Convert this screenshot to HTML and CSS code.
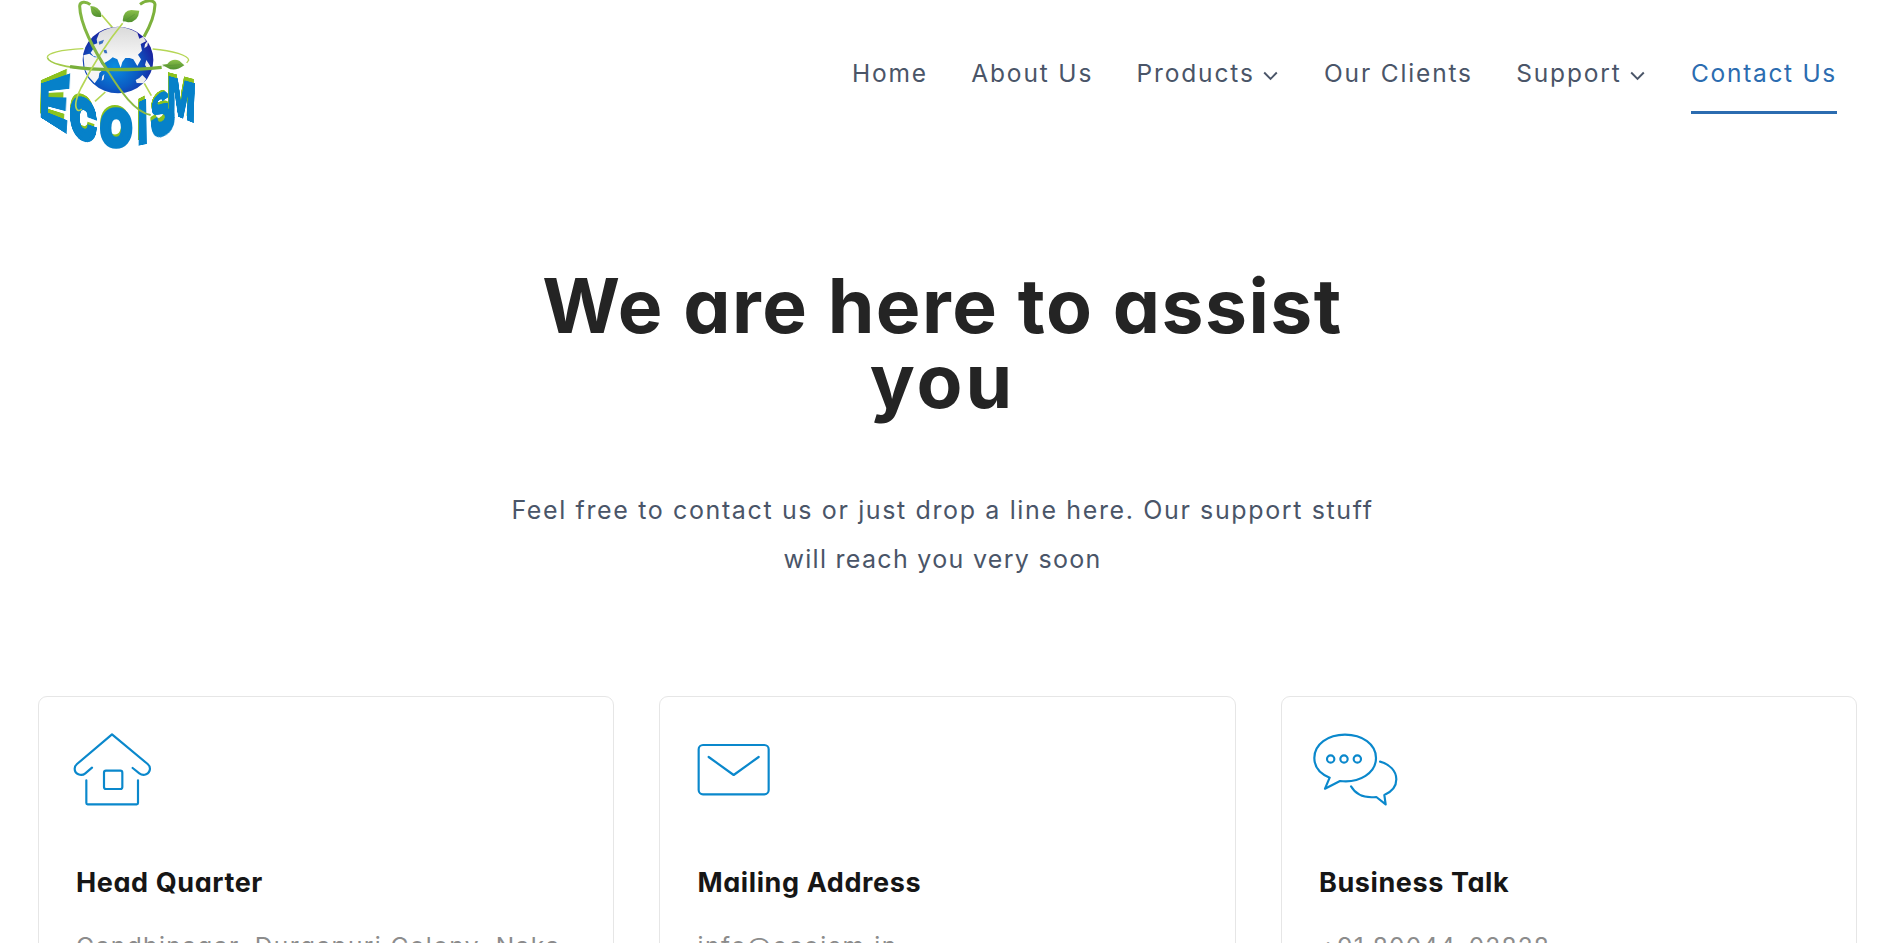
FILE: index.html
```
<!DOCTYPE html>
<html lang="en">
<head>
<meta charset="utf-8">
<title>Contact Us</title>
<link rel="stylesheet" href="styles.css">
</head>
<body>
<header class="header">
  <a class="logo" href="#">
    <span class="letter" data-quad="34,252 120,224 110,401 32,352">E</span>
    <span class="letter bold" data-quad="123,282 197,312 197,431 123,408">C</span>
    <span class="letter bold" data-quad="214,328 304,328 304,439 214,439">O</span>
    <span class="letter" data-quad="327,308 348,298 350,431 326,436">I</span>
    <span class="letter" data-quad="364,300 410,264 446,388 362,424">S</span>
    <span class="letter" data-quad="416,230 494,252 490,368 416,338">M</span>
    <svg class="emblem" viewBox="0 0 540 480" fill="none">
      <defs>
        <radialGradient id="sea" cx=".45" cy=".6" r=".6"><stop offset="0" stop-color="#0a8ee0"/><stop offset=".55" stop-color="#0b5cc4"/><stop offset="1" stop-color="#1c1c9c"/></radialGradient>
        <linearGradient id="land" x1="0" y1="0" x2="0" y2="1"><stop offset="0" stop-color="#dadada"/><stop offset="1" stop-color="#fff"/></linearGradient>
        <linearGradient id="leaf" x1="0" y1="0" x2="0" y2="1"><stop offset="0" stop-color="#8bc04a"/><stop offset="1" stop-color="#4f8f2e"/></linearGradient>
      </defs>
      <path d="M160 146C90 149 52 160 52 172M368 147C430 152 474 166 476 180L470 189" stroke="#b5d655" stroke-width="4"/>
      <path d="M215 45L247 82M343 250L364 287M226 276L195 304" stroke="#b5d655" stroke-width="5"/>
      <path d="M330 13C350-2 374 0 375 14C374 40 362 76 342 110" stroke="#7db13c" stroke-width="9"/>
      <ellipse cx="264" cy="180" rx="106" ry="100" fill="url(#sea)"/>
      <path d="M208 98Q264 64 322 98L328 116L340 110L348 124L332 132L336 152L324 164L333 178L322 198L310 178L299 174L286 174L277 186L272 203L262 178L248 172L238 180L222 190L206 172L190 168L182 158L190 146L186 136L202 130L200 118Z" fill="url(#land)"/>
      <path d="M160 166L178 161L194 172L206 172L214 192L226 203L208 219L206 233L194 250L176 230L164 206Z" fill="#f5f5f5"/>
      <path d="M317 240L328 234L337 225L349 237L340 250L320 249ZM217 229L223 222L221 238L215 243ZM345 133L355 119L352 138L343 145ZM349 180L361 199L354 209L345 195Z" fill="#eee"/>
      <path d="M206 125L222 119L218 130L208 134ZM220 151L229 149L232 160L224 160Z" fill="#3a6ec0"/>
      <path d="M52 172C56 190 108 203 180 207" stroke="#a2ca48" stroke-width="5"/>
      <path d="M120 200C200 213 320 210 395 202" stroke="#78af3a" stroke-width="10"/>
      <path d="M278 70C218 143 184 204 153 264C137 297 134 321 142 330Q149 334 155 327" stroke="#b5d655" stroke-width="5"/>
      <path d="M181 14C167 3 150 5 149 18C150 70 190 150 235 215" stroke="#82b642" stroke-width="9"/>
      <path d="M232 211C270 272 315 337 362 345" stroke="#8dbb45" stroke-width="6"/>
      <path d="M181 18Q206 18 214 42L213 51Q187 53 184 36Z" fill="url(#leaf)"/>
      <path d="M278 62Q280 30 304 30L328 32Q325 66 294 67Z" fill="url(#leaf)"/>
      <path d="M396 194L412 192Q426 174 448 182L463 196Q434 217 412 203Z" fill="url(#leaf)"/>
      <path d="M184 20L213 49M279 66L314 43M398 198L451 194" stroke="#568c35" stroke-width="1.5"/>
    </svg>
  </a>
  <nav class="nav">
    <a class="nav-link" href="#">Home</a>
    <a class="nav-link" href="#">About Us</a>
    <a class="nav-link" href="#">Products<svg class="chevron" viewBox="0 0 15 10"><path d="M1.2 1.5L7.5 8L13.8 1.5"/></svg></a>
    <a class="nav-link" href="#">Our Clients</a>
    <a class="nav-link" href="#">Support<svg class="chevron" viewBox="0 0 15 10"><path d="M1.2 1.5L7.5 8L13.8 1.5"/></svg></a>
    <a class="nav-link active" href="#">Contact Us</a>
  </nav>
</header>
<main>
  <section class="intro">
    <h1 class="title">We are here to assist<br><span class="title-end">you</span></h1>
    <p class="lead">Feel free to contact us or just drop a line here. Our support stuff<br><span class="lead-end">will reach you very soon</span></p>
  </section>
  <section class="cards">
    <article class="card">
      <svg class="icon" viewBox="48 39 240 225"><path d="M96 143L76 160C63 171 44 161 44 146Q44 138 51 132L156 43L263 132Q270 138 270 146C269 162 251 170 238 160L218 144M79 181V249Q79 253 83 253H230Q234 253 234 249V181"/><rect x="132" y="152" width="55" height="55" rx="6"/></svg>
      <h2 class="card-title">Head Quarter</h2>
      <p class="card-text">Gandhinagar, Durgapuri Colony, Naka</p>
    </article>
    <article class="card">
      <svg class="icon" viewBox="-1 0 240 225"><rect x="4" y="36" width="210" height="148" rx="13"/><path d="M34 72L109 126L184 72"/></svg>
      <h2 class="card-title">Mailing Address</h2>
      <p class="card-text email">info@ecoism.in</p>
    </article>
    <article class="card">
      <svg class="icon" viewBox="58 39 240 225"><path d="M90 173C58 160 44 139 44 114C44 73 85 44 136 44C188 44 229 73 229 114C229 158 181 190 121 183L76 206ZM241 125C271 133 290 153 290 178C290 200 275 216 254 225L258 253L230 231C193 235 168 224 154 199"/><circle cx="93" cy="117" r="11"/><circle cx="133" cy="117" r="11"/><circle cx="173" cy="117" r="11"/></svg>
      <h2 class="card-title">Business Talk</h2>
      <p class="card-text phone">+91 80044-02828</p>
    </article>
  </section>
</main>
<script src="logo.js"></script>
</body>
</html>
```

FILE: styles.css
```
* { box-sizing: border-box; }
body { margin: 0; height: 943px; overflow: hidden; background: #fff; font-family: Inter, "Open Sans", sans-serif; color: #4a5568; }
h1, h2, p { margin: 0; font-weight: 400; }
a { color: inherit; text-decoration: none; }
main { height: 795px; overflow: hidden; }
.header { display: flex; justify-content: space-between; height: 148px; padding: 0 51px 0 30px; }
.logo { position: relative; width: 180px; height: 148px; }
.letter { position: absolute; left: 0; top: 0; transform-origin: 0 0; font: 900 100px/100px Inter, sans-serif; color: #0681c9; -webkit-text-stroke: 2px #0681c9; text-shadow: -3px -8px 0 #8cc21f; }
.bold { -webkit-text-stroke-width: 7px; }
.emblem { position: absolute; left: 0; top: 0; width: 180px; height: 160px; }
.nav { display: flex; gap: 43.3px; padding-top: 58px; }
.nav-link { display: flex; align-items: center; height: 56px; padding-bottom: 26px; font-size: 24.5px; line-height: 30px; letter-spacing: 1.85px; white-space: nowrap; }
.active { color: #2b6cb0; border-bottom: 3px solid #2b6cb0; padding-bottom: 23px; letter-spacing: 1.7px; }
.chevron { width: 15px; height: 10px; margin: 5px 3px 0 8px; fill: none; stroke: #4a5568; stroke-width: 1.9; }
.intro { padding: 120px 3px 0 0; text-align: center; }
.title { font-size: 75px; line-height: 75px; font-weight: 700; letter-spacing: 1.5px; color: #242424; font-feature-settings: "cv11"; }
.title-end { letter-spacing: 3px; }
.lead { margin-top: 68px; font-size: 25px; line-height: 49px; letter-spacing: 1.63px; }
.lead-end { letter-spacing: 1.3px; }
.cards { display: grid; grid-template-columns: repeat(3, 1fr); gap: 45px; margin-top: 112px; padding: 0 30.6px 0 38px; }
.card { height: 400px; padding: 36px 37px; border: 1px solid #e6e6e6; border-radius: 9px; }
.icon { display: block; width: 80px; height: 75px; overflow: visible; fill: none; stroke: #0a88cc; stroke-width: 6.5; stroke-linecap: round; stroke-linejoin: round; }
.card-title { margin-top: 57px; font-size: 27px; line-height: 36px; font-weight: 700; letter-spacing: .6px; color: #161616; font-feature-settings: "cv11"; white-space: nowrap; }
.card-text { margin-top: 23px; font-size: 24.5px; line-height: 44px; letter-spacing: 1.4px; color: #8c8c8c; white-space: nowrap; }
.email { letter-spacing: 1.6px; }
.phone { padding-left: 1px; letter-spacing: 1.15px; }
```

FILE: logo.js
```
// Warps each wordmark letter so its ink box fills the quad in data-quad (3 units per pixel).
function warp(el) {
  const ctx = document.createElement('canvas').getContext('2d');
  const style = getComputedStyle(el);
  ctx.font = `${style.fontWeight} 100px ${style.fontFamily}`;
  const m = ctx.measureText(el.textContent);
  const base = 50 + (m.fontBoundingBoxAscent - m.fontBoundingBoxDescent) / 2;
  const x0 = -m.actualBoundingBoxLeft, w = m.actualBoundingBoxRight - x0;
  const y0 = base - m.actualBoundingBoxAscent, h = base + m.actualBoundingBoxDescent - y0;
  const [a, b, c, d] = el.dataset.quad.split(' ').map(p => p.split(',').map(v => v / 3));
  const dx1 = b[0] - c[0], dx2 = d[0] - c[0], sx = a[0] - b[0] + c[0] - d[0];
  const dy1 = b[1] - c[1], dy2 = d[1] - c[1], sy = a[1] - b[1] + c[1] - d[1];
  const det = dx1 * dy2 - dx2 * dy1;
  const g = (sx * dy2 - dx2 * sy) / det, k = (dx1 * sy - sx * dy1) / det;
  const mat = [
    b[0] - a[0] + g * b[0], b[1] - a[1] + g * b[1], 0, g,
    d[0] - a[0] + k * d[0], d[1] - a[1] + k * d[1], 0, k,
    0, 0, 1, 0, a[0], a[1], 0, 1
  ];
  el.style.transform = `matrix3d(${mat.map(v => v.toFixed(6)).join(',')}) scale(${1 / w}, ${1 / h}) translate(${-x0}px, ${-y0}px)`;
}
document.querySelectorAll('.letter').forEach(warp);
```
